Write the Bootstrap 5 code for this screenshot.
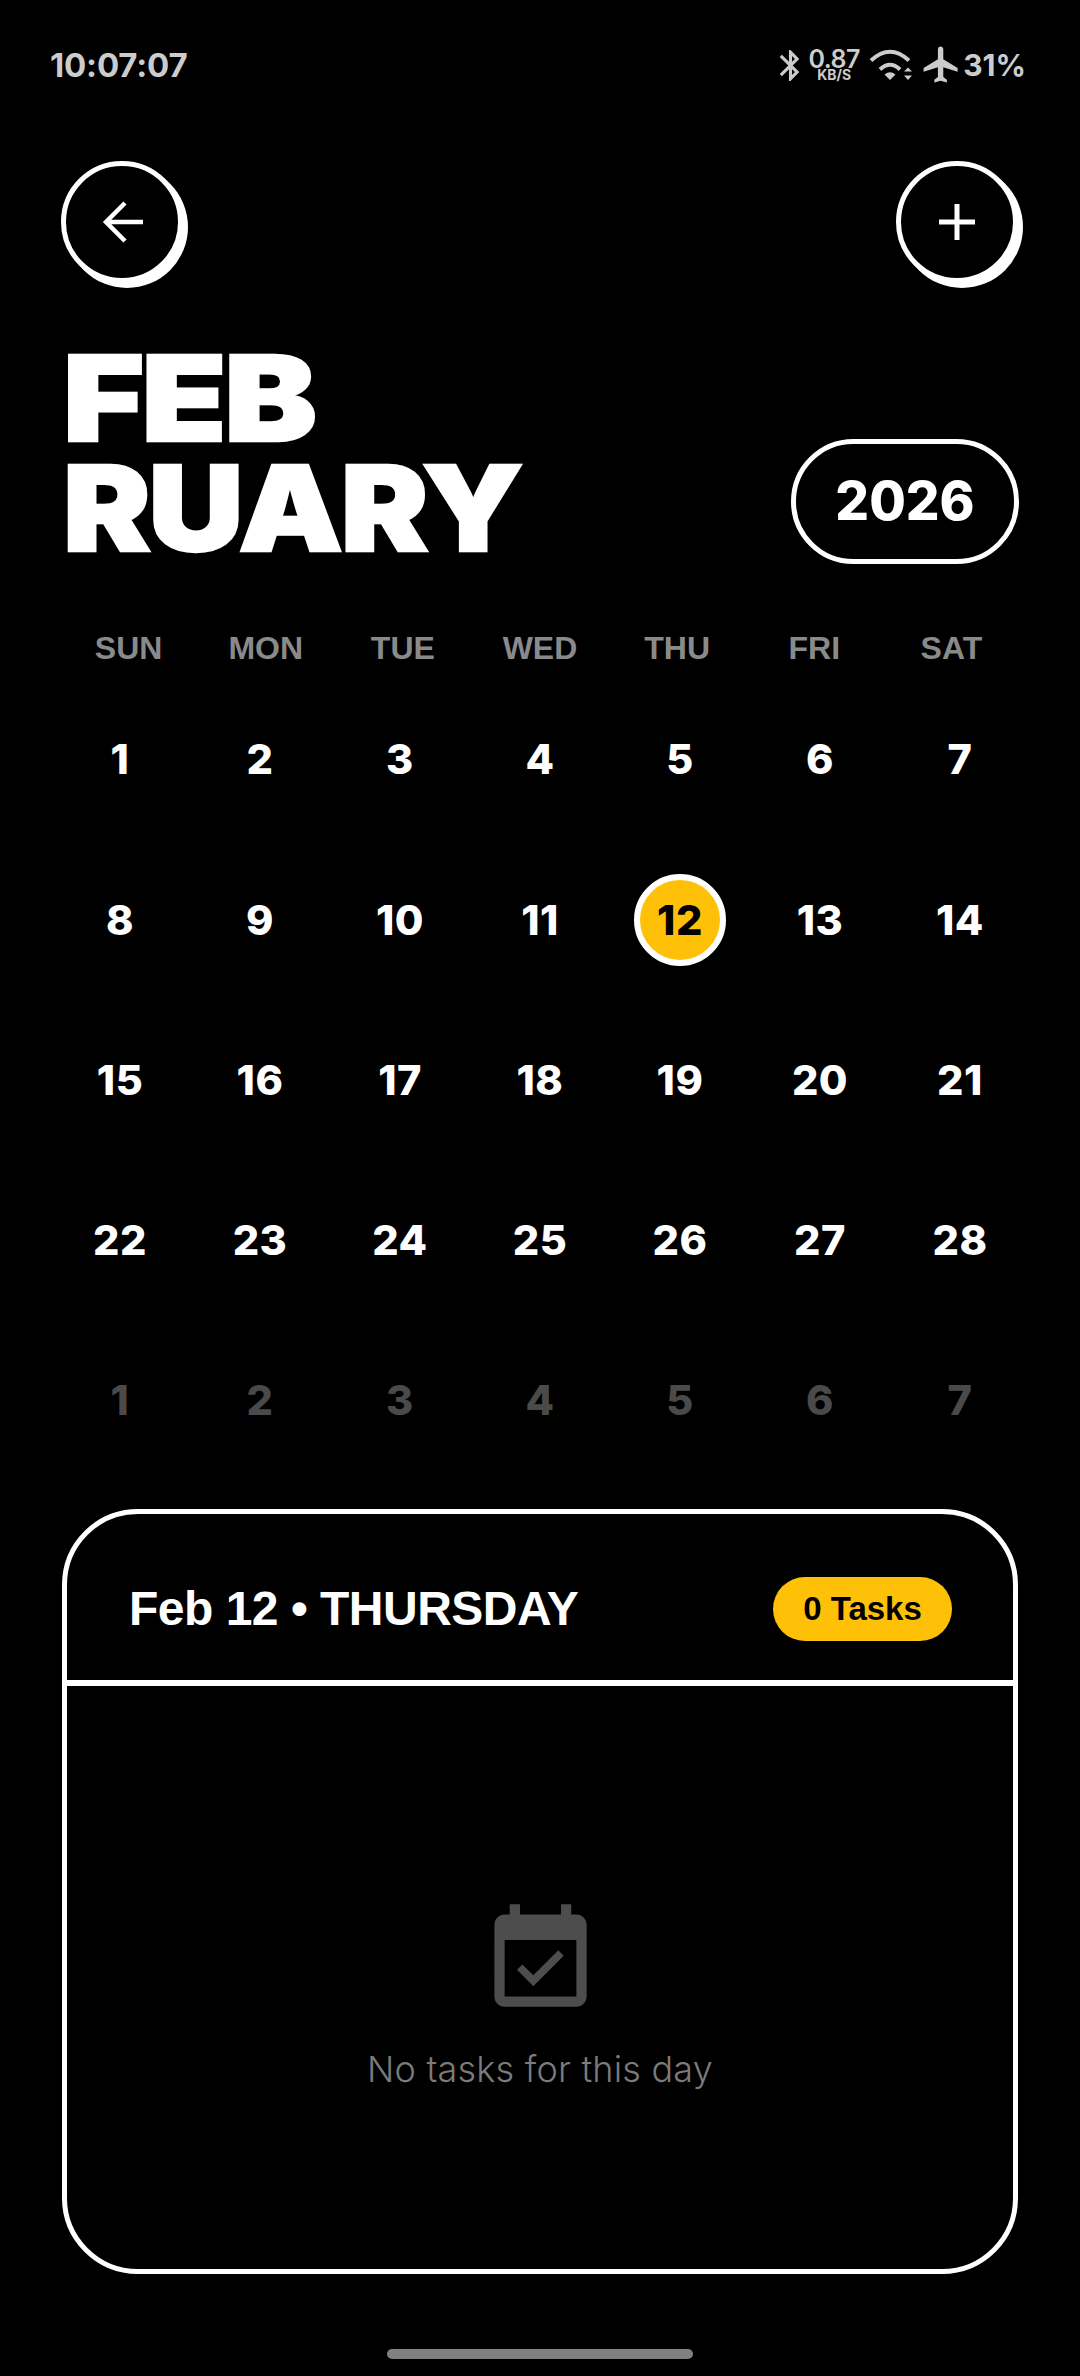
<!DOCTYPE html>
<html lang="en">
<head>
<meta charset="utf-8">
<title>Calendar</title>
<link href="https://cdn.jsdelivr.net/npm/bootstrap@5.3.0/dist/css/bootstrap.min.css" rel="stylesheet">
<style>
:root{--amber:#ffc107;--wide:"Inter","Liberation Sans",sans-serif;--grot:"Liberation Sans",Arial,sans-serif;}
html,body{background:#000;margin:0;}
.screen{width:1080px;height:2376px;overflow:hidden;background:#000;color:#fff;font-family:var(--grot);}
.stat-bar{height:130px;padding:0 54px 0 50px;color:#ccc;}
.clock{font:700 33px/1 var(--wide);letter-spacing:-.2px;}
.speed{width:48px;margin:0 10px 0 10px;line-height:1;font-family:var(--wide);font-weight:600;}
.speed-num{font-size:25px;line-height:20px;letter-spacing:-.5px;}
.speed-unit{font-size:14px;line-height:12px;font-weight:700;}
.batt{font:700 30px/1 var(--wide);letter-spacing:0;margin-left:4px;}
.top-row{margin-top:31px;padding:0 62px 0 61px;}
.round-btn{width:122px;height:122px;border:5px solid #fff;border-radius:50%;background:#000;box-shadow:5px 5px 0 #fff;padding:0;}
.head-row{margin-top:58px;padding:0 61px 0 63px;}
.month{font:900 118px/110px var(--wide);letter-spacing:-2px;margin:2px 0 -2px;-webkit-text-stroke:2.5px #fff;}
.month-a,.month-b{display:block;transform-origin:0 50%;}
.month-a{transform:scaleX(1.175);}
.month-b{transform:scaleX(1.113);}
.year-pill{width:228px;height:125px;border:5px solid #fff;border-radius:63px;font:800 53px/1 var(--wide);margin-bottom:-3px;}
.week-grid{display:grid;grid-template-columns:repeat(7,1fr);margin:63px 60px 8px;height:48px;align-items:center;text-align:center;color:#8a8a8a;font:700 32px/48px var(--grot);}
.day-grid{display:grid;grid-template-columns:repeat(7,140px);grid-auto-rows:160.2px;margin:0 50px;}
.day-cell{font:800 41.500px/1 var(--wide);letter-spacing:.5px;}
.day-cell.out{color:#4a4a4a;}
.today-dot{width:92px;height:92px;border:6px solid #fff;border-radius:50%;background:var(--amber);color:#000;}
.task-card{margin:28px 62px 0;height:765px;background:#000;border:5px solid #fff;border-radius:76px;color:#fff;}
.task-head{height:172px;padding:24px 61px 0 62px;border-bottom:6px solid #fff;background:transparent;border-radius:0!important;}
.task-title{font:700 48px/1 var(--grot);letter-spacing:-.5px;margin:0;}
.count-pill{width:179px;height:64px;border-radius:32px;background:var(--amber);color:#000;font:700 33px/1 var(--grot);}
.task-body{padding:213px 0 0;}
.empty-icon{display:block;fill:#4d4d4d;}
.empty-text{font:300 36px/1 var(--wide);letter-spacing:.2px;color:#7b7b7b;margin-top:29px;}
.home-bar{width:306px;height:10px;border-radius:5px;background:#808080;margin:75px auto 0;}
</style>
</head>
<body>
<div class="screen">
  <div class="stat-bar d-flex align-items-center justify-content-between">
    <span class="clock">10:07:07</span>
    <div class="d-flex align-items-center">
      <svg width="37" height="37" viewBox="0 0 24 24" fill="#ccc" style="margin-right:-9px"><path d="M17.71 7.71L12 2h-1v7.59L6.41 5 5 6.41 10.59 12 5 17.59 6.41 19 11 14.41V22h1l5.71-5.71-4.3-4.29 4.3-4.29zM13 5.83l1.88 1.88L13 9.59V5.83zm1.88 10.46L13 18.17v-3.76l1.88 1.88z"/></svg>
      <div class="speed d-flex flex-column align-items-center"><span class="speed-num">0.87</span><span class="speed-unit">KB/S</span></div>
      <svg width="46" height="36" viewBox="868 46 46 36" fill="#ccc"><path d="M871 59.500Q890 42 909 59.500M880 68.500Q890 59 900 68.500" fill="none" stroke="#ccc" stroke-width="4"/><path d="M884.500 73.500Q890 69 895.500 73.500L890 79zM904 70.500L908 66.500 912 70.500zM904 74.500H912L908 79z"/></svg>
      <svg width="43" height="43" viewBox="0 0 24 24" fill="#ccc" style="margin:-2px -4px 0 6px"><path d="M21 16v-2l-8-5V3.500c0-.83-.67-1.500-1.500-1.500S10 2.670 10 3.500V9l-8 5v2l8-2.500V19l-2 1.500V22l3.500-1 3.500 1v-1.500L13 19v-5.500l8 2.500z"/></svg>
      <span class="batt">31%</span>
    </div>
  </div>

  <div class="top-row d-flex justify-content-between">
    <button type="button" class="round-btn d-flex align-items-center justify-content-center" aria-label="Back">
      <svg width="48" height="48" viewBox="0 0 48 48" fill="none" stroke="#fff" stroke-width="4.500"><path d="M45 24H8M27 5L8 24l19 19"/></svg>
    </button>
    <button type="button" class="round-btn d-flex align-items-center justify-content-center" aria-label="Add">
      <svg width="48" height="48" viewBox="0 0 48 48" fill="none" stroke="#fff" stroke-width="5"><path d="M6 24H42M24 6V42"/></svg>
    </button>
  </div>

  <div class="head-row d-flex justify-content-between align-items-end">
    <h1 class="month"><span class="month-a">FEB</span><span class="month-b">RUARY</span></h1>
    <div class="year-pill d-flex align-items-center justify-content-center">2026</div>
  </div>

  <div class="week-grid">
    <span>SUN</span><span>MON</span><span>TUE</span><span>WED</span><span>THU</span><span>FRI</span><span>SAT</span>
  </div>

  <div class="day-grid" id="days"></div>

  <div class="card task-card">
    <div class="card-header task-head d-flex align-items-center justify-content-between">
      <h2 class="task-title">Feb 12 • THURSDAY</h2>
      <span class="count-pill d-flex align-items-center justify-content-center">0 Tasks</span>
    </div>
    <div class="card-body task-body d-flex flex-column align-items-center">
      <svg class="empty-icon" width="123" height="123" viewBox="0 0 24 24"><path d="M16.530 11.060L15.470 10l-4.880 4.880-2.120-2.120-1.060 1.060L10.590 17l5.940-5.940zM19 3h-1V1h-2v2H8V1H6v2H5c-1.110 0-1.990.9-1.990 2L3 19c0 1.100.89 2 2 2h14c1.100 0 2-.9 2-2V5c0-1.100-.9-2-2-2zm0 16H5V8h14v11z"/></svg>
      <p class="empty-text">No tasks for this day</p>
    </div>
  </div>
  <div class="home-bar"></div>
</div>
<script src="https://cdn.jsdelivr.net/npm/bootstrap@5.3.0/dist/js/bootstrap.bundle.min.js"></script>
<script>
var g=document.getElementById('days'),h='';
for(var d=1;d<=35;d++){
  var n=d>28?d-28:d,c='day-cell d-flex align-items-center justify-content-center'+(d>28?' out':'');
  h+='<div class="'+c+'">'+(d===12?'<span class="today-dot d-flex align-items-center justify-content-center">12</span>':n)+'</div>';
}
g.innerHTML=h;
</script>
</body>
</html>
